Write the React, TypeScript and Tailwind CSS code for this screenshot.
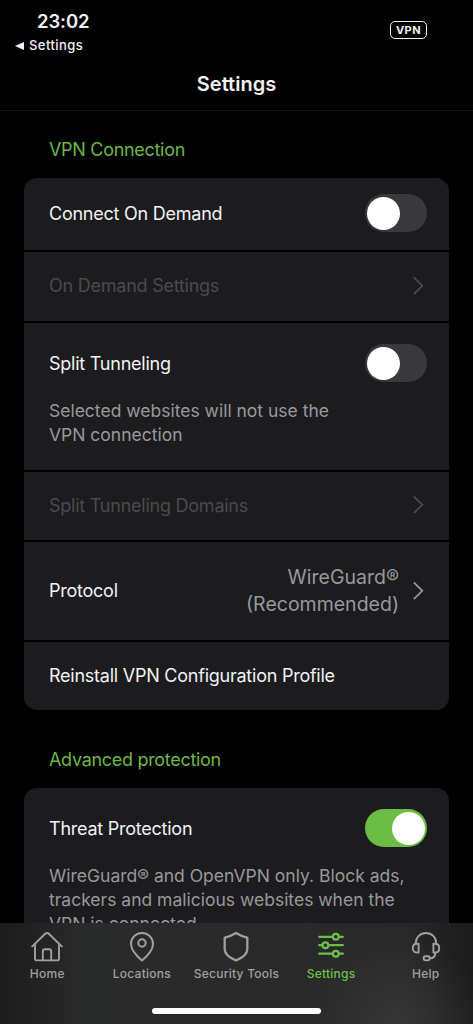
import { useState, type ReactNode } from "react"
import clsx from "clsx"

interface ToggleProps {
    label: string
    checked: boolean
    onChange: (value: boolean) => void
}

function Toggle({ label, checked, onChange }: ToggleProps) {
    return (
        <button
            type="button"
            role="switch"
            aria-label={label}
            aria-checked={checked}
            onClick={() => onChange(!checked)}
            className={clsx(
                "flex h-[38px] w-[62px] shrink-0 items-center rounded-full px-[2px]",
                checked ? "justify-end bg-[#6cbd45]" : "justify-start bg-[#39393d]"
            )}
        >
            <span className="size-[33px] rounded-full bg-white" />
        </button>
    )
}

function Chevron({ className }: { className?: string }) {
    return (
        <svg width="12" height="20" viewBox="0 0 12 20" fill="none" className={clsx("shrink-0", className)}>
            <path d="M1.8 1.4L10.3 9.8L1.8 18.2" stroke="currentColor" strokeWidth="1.8" />
        </svg>
    )
}

function SectionTitle({ children }: { children: ReactNode }) {
    return <h2 className="shrink-0 px-[25px] text-[18px] leading-6 tracking-[-0.3px] text-[#6cb844]">{children}</h2>
}

function Card({ children }: { children: ReactNode }) {
    return <div className="flex shrink-0 flex-col gap-[2px] overflow-hidden rounded-[13px]">{children}</div>
}

function Row({ className, children }: { className?: string; children: ReactNode }) {
    return (
        <div className={clsx("flex items-center justify-between bg-[#1c1c1e] pl-[25px] pr-[22px]", className)}>
            {children}
        </div>
    )
}

function RowLabel({ children }: { children: ReactNode }) {
    return <span className="text-[18px] tracking-[-0.24px]">{children}</span>
}

const tabs = [
    {
        name: "Home",
        strokeWidth: 1.9,
        icon: (
            <>
                <path d="M1.2 15.4L14.2 2.7Q16 1.1 17.8 2.7L30.8 15.4" />
                <path d="M4 13V27.5Q4 29.4 5.9 29.4H26.1Q28 29.4 28 27.5V13" />
                <path d="M11.8 29.4V20.4Q11.8 18.3 13.9 18.3H18.1Q20.2 18.3 20.2 20.4V29.4" />
            </>
        ),
    },
    {
        name: "Locations",
        strokeWidth: 2,
        icon: (
            <>
                <path d="M16 29.6C12.5 26.6 5 19.6 5 13C5 6.7 9.8 2 16 2C22.2 2 27 6.7 27 13C27 19.6 19.5 26.6 16 29.6Z" />
                <circle cx="16" cy="12" r="3.7" />
            </>
        ),
    },
    {
        name: "Security Tools",
        strokeWidth: 2.3,
        icon: <path d="M16 2C19.4 4.2 23 5.6 27.3 6.6V18.2C27.3 23.4 22.2 26.8 16 29.4C9.8 26.8 4.7 23.4 4.7 18.2V6.6C9 5.6 12.6 4.2 16 2Z" />,
    },
    {
        name: "Settings",
        strokeWidth: 2.2,
        icon: (
            <>
                <path d="M4.2 5.8H17.4M24 5.8H27.8" />
                <circle cx="20.8" cy="5.8" r="2.9" />
                <path d="M4.2 14.2H7M13.4 14.2H27.8" />
                <circle cx="10.4" cy="14.2" r="2.9" />
                <path d="M4.2 22.7H17.4M24 22.7H27.8" />
                <circle cx="20.8" cy="22.7" r="2.9" />
            </>
        ),
    },
    {
        name: "Help",
        strokeWidth: 1.9,
        icon: (
            <>
                <path d="M5.8 12.8V12C5.8 6.3 10.2 2 16 2C21.8 2 26.2 6.3 26.2 12V12.8" />
                <path d="M8.6 12.8V21.6H7.2C4.4 21.6 2.8 19.8 2.8 17.2C2.8 14.6 4.4 12.8 7.2 12.8Z" />
                <path d="M23.4 12.8V21.6H24.8C27.6 21.6 29.2 19.8 29.2 17.2C29.2 14.6 27.6 12.8 24.8 12.8Z" />
                <path d="M25.4 21.6C25.2 25.4 23.4 27.4 19.8 27.4" />
                <rect x="13.6" y="25.2" width="6.2" height="4.2" rx="2.1" />
            </>
        ),
    },
]

export default function App() {
    const [onDemand, setOnDemand] = useState(false)
    const [splitTunneling, setSplitTunneling] = useState(false)
    const [threatProtection, setThreatProtection] = useState(true)
    const [activeTab, setActiveTab] = useState("Settings")

    return (
        <div className="flex h-[1024px] w-[473px] flex-col overflow-hidden bg-black font-[Inter,sans-serif] text-[#f2f2f2]">
            <header className="h-[111px] shrink-0 border-b border-[#121212]">
                <div className="flex h-[60px] justify-between pl-[15px] pr-[46px]">
                    <div className="pt-[9px]">
                        <div className="pl-[22px] text-[18.5px] font-semibold leading-6 tracking-[-0.1px]">23:02</div>
                        <div className="flex h-[26px] items-center gap-[5px] text-[13px] font-medium tracking-[0.45px]">
                            <svg width="9" height="8" viewBox="0 0 9 8" fill="currentColor">
                                <path d="M0 4L9 0V8Z" />
                            </svg>
                            Settings
                        </div>
                    </div>
                    <div className="mt-[21px] flex h-[18px] w-[37px] items-center justify-center rounded-[5px] border-[1.5px] border-[#f2f2f2] text-[11px] font-bold tracking-[0.5px]">
                        VPN
                    </div>
                </div>
                <h1 className="pt-[10px] text-center text-[20px] font-semibold leading-7">Settings</h1>
            </header>

            <main className="flex min-h-0 flex-1 flex-col overflow-hidden px-6 pt-[27px]">
                <SectionTitle>VPN Connection</SectionTitle>
                <div className="h-4 shrink-0" />
                <Card>
                    <Row className="h-[72px] pb-[2px]">
                        <RowLabel>Connect On Demand</RowLabel>
                        <Toggle label="Connect On Demand" checked={onDemand} onChange={setOnDemand} />
                    </Row>
                    <Row className="h-[69px] pr-[25px]! pb-[2px] text-[#4b4b4d]">
                        <RowLabel>On Demand Settings</RowLabel>
                        <Chevron />
                    </Row>
                    <div className="h-[147px] bg-[#1c1c1e] pt-[21px]">
                        <Row>
                            <RowLabel>Split Tunneling</RowLabel>
                            <Toggle label="Split Tunneling" checked={splitTunneling} onChange={setSplitTunneling} />
                        </Row>
                        <p className="px-[25px] pt-[17px] text-[17.5px] leading-[24px] text-[#98989b]">
                            Selected websites will not use the
                            <br />
                            VPN connection
                        </p>
                    </div>
                    <Row className="h-[68px] pr-[25px]! pb-[2px] text-[#4b4b4d]">
                        <RowLabel>Split Tunneling Domains</RowLabel>
                        <Chevron />
                    </Row>
                    <Row className="h-[98px] pr-[25px]! pb-px">
                        <RowLabel>Protocol</RowLabel>
                        <div className="flex items-center gap-[13px] text-[#98989b]">
                            <span className="text-right text-[19.5px] leading-[27px]">
                                WireGuard®
                                <br />
                                (Recommended)
                            </span>
                            <Chevron />
                        </div>
                    </Row>
                    <Row className="h-[68px] pb-[2px]">
                        <RowLabel>Reinstall VPN Configuration Profile</RowLabel>
                    </Row>
                </Card>

                <div className="h-[38px] shrink-0" />
                <SectionTitle>Advanced protection</SectionTitle>
                <div className="h-4 shrink-0" />
                <Card>
                    <div className="h-[170px] bg-[#1c1c1e] pt-[21px]">
                        <Row>
                            <RowLabel>Threat Protection</RowLabel>
                            <Toggle label="Threat Protection" checked={threatProtection} onChange={setThreatProtection} />
                        </Row>
                        <p className="whitespace-nowrap px-[25px] pt-[17px] text-[17.5px] leading-[24px] text-[#98989b]">
                            WireGuard® and OpenVPN only. Block ads,
                            <br />
                            trackers and malicious websites when the
                            <br />
                            VPN is connected.
                        </p>
                    </div>
                </Card>
            </main>

            <nav className="flex h-[101px] shrink-0 flex-col items-center justify-between bg-[radial-gradient(circle_at_84%_100%,#353636_0%,transparent_22%),linear-gradient(90deg,#1b1c1b_0%,#292a2a_18%,#29292a_85%,#1b1b1b_100%)] pt-2 pb-[10px]">
                <div className="flex w-full">
                    {tabs.map((tab) => (
                        <button
                            key={tab.name}
                            type="button"
                            onClick={() => setActiveTab(tab.name)}
                            className={clsx(
                                "flex flex-1 basis-0 flex-col items-center gap-[3px]",
                                tab.name === activeTab ? "text-[#6cc04a]" : "text-[#a0a0a2]"
                            )}
                        >
                            <svg width="32" height="32" viewBox="0 0 32 32" fill="none" stroke="currentColor" strokeWidth={tab.strokeWidth} strokeLinecap="round" strokeLinejoin="round">
                                {tab.icon}
                            </svg>
                            <span className="whitespace-nowrap text-[12px] font-medium leading-4 tracking-[0.25px]">{tab.name}</span>
                        </button>
                    ))}
                </div>
                <div className="h-[6px] w-[169px] rounded-full bg-white" />
            </nav>
        </div>
    )
}
